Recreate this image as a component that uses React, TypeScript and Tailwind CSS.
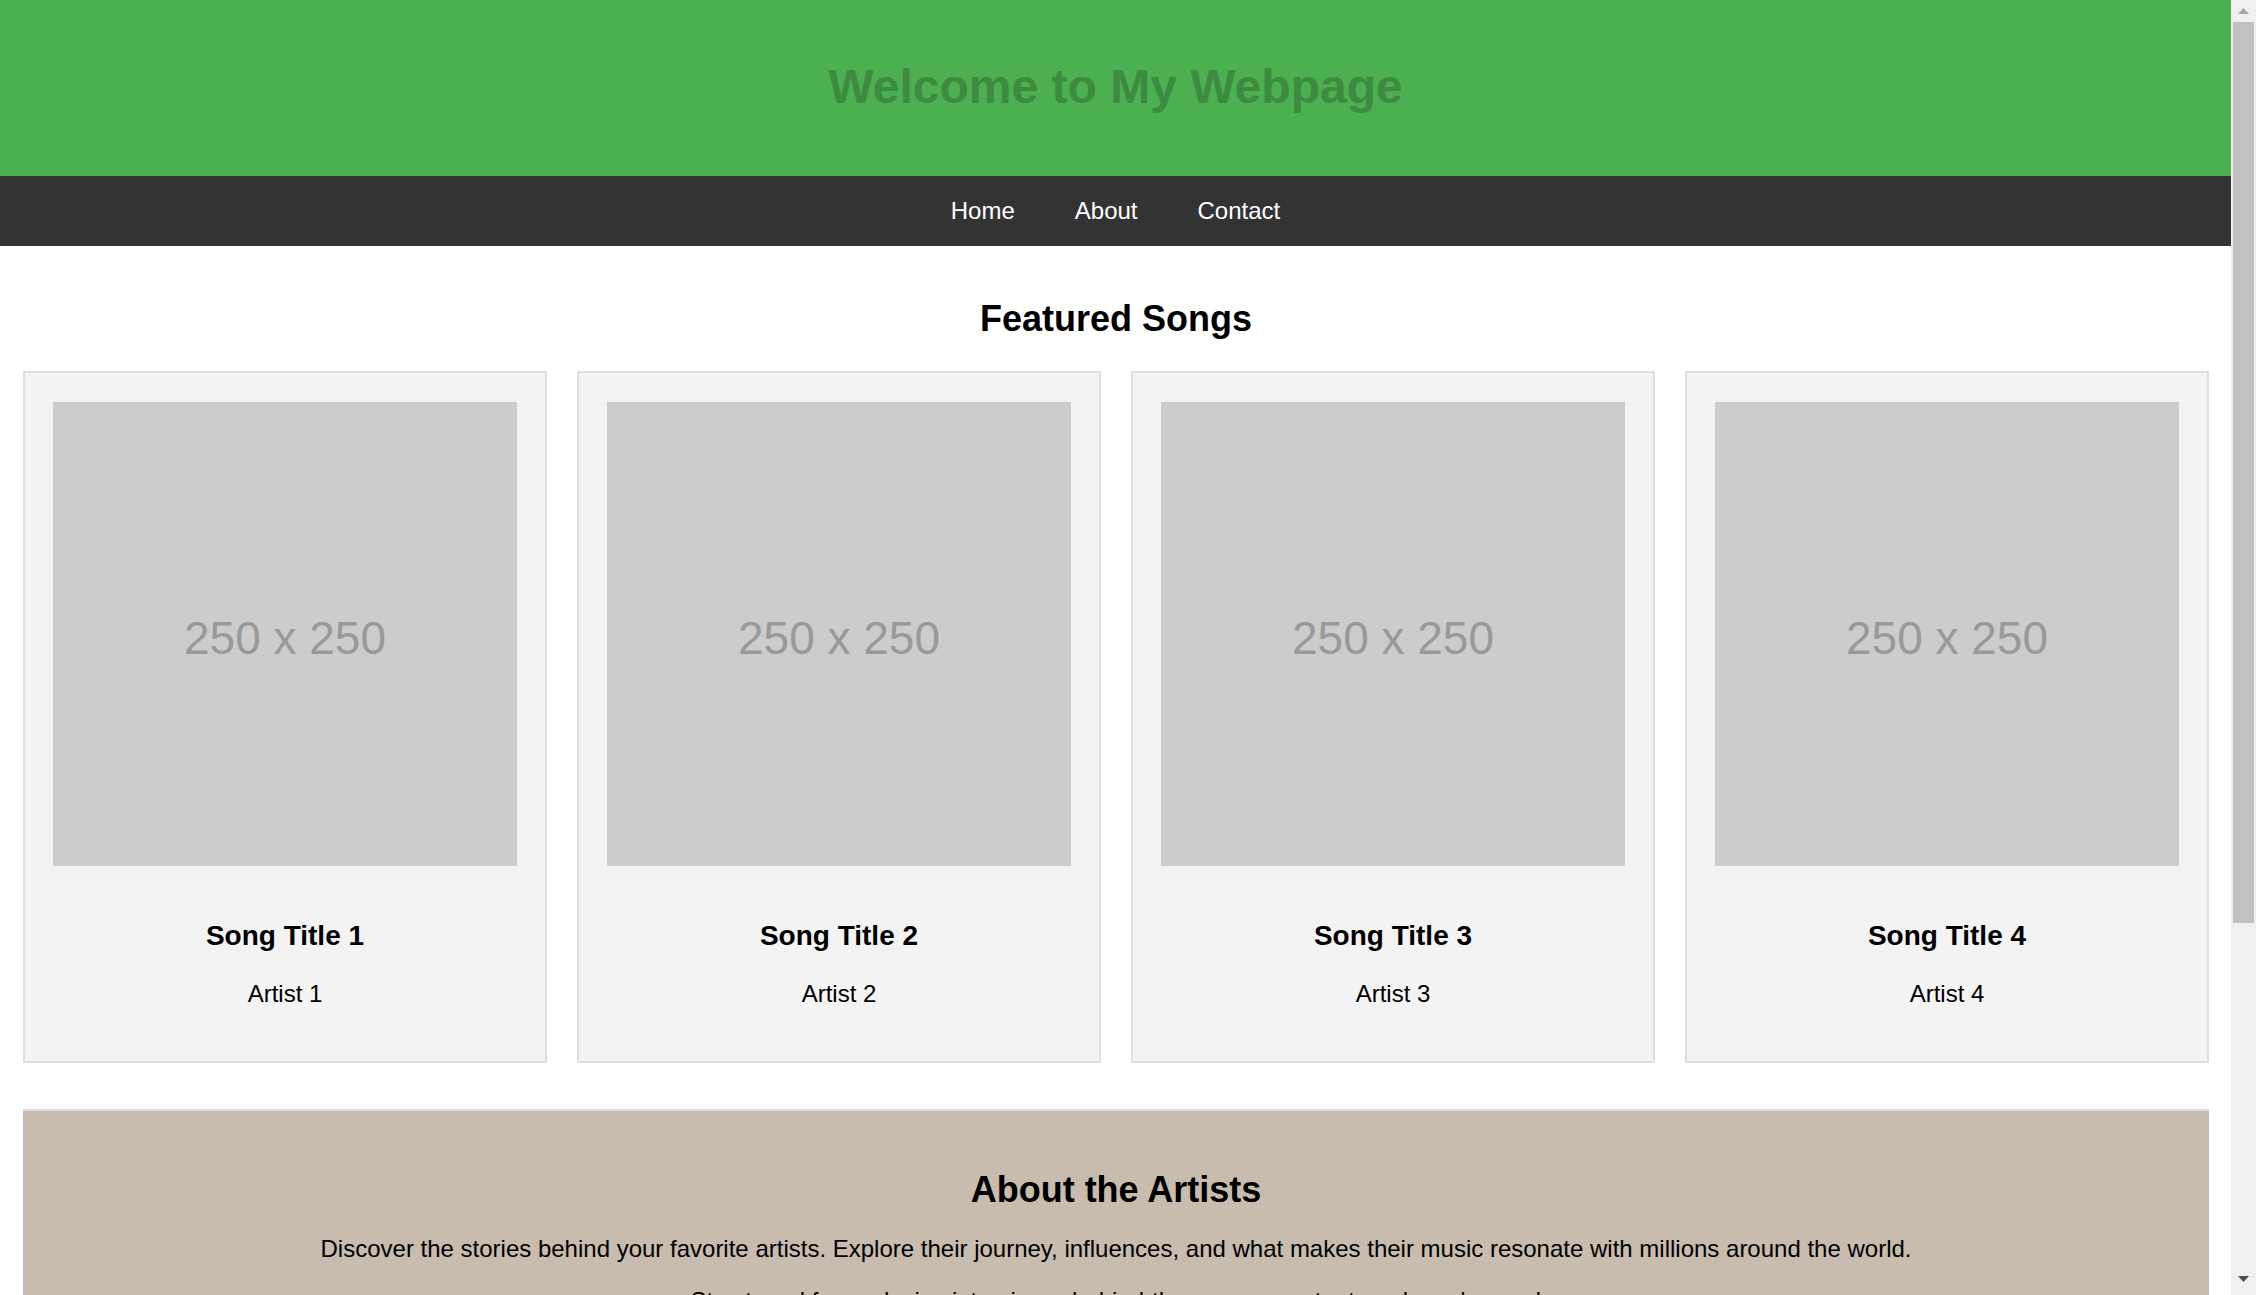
const songs = [
  { id: 1, title: "Song Title 1", artist: "Artist 1" },
  { id: 2, title: "Song Title 2", artist: "Artist 2" },
  { id: 3, title: "Song Title 3", artist: "Artist 3" },
  { id: 4, title: "Song Title 4", artist: "Artist 4" },
]

function Scrollbar() {
  return (
    <div className="w-[25px] shrink-0 h-screen bg-[#f0f0f0] flex flex-col items-center">
      <div className="h-[22px] w-full flex items-center justify-center">
        <svg width="11" height="6" viewBox="0 0 11 6">
          <path d="M5.5 0 L11 6 L0 6 Z" fill="#a3a3a3" />
        </svg>
      </div>
      <div className="w-[21px] h-[901px] bg-[#c1c1c1]" />
      <div className="flex-1" />
      <div className="h-[22px] w-full flex items-start justify-center pt-[3px]">
        <svg width="11" height="6" viewBox="0 0 11 6">
          <path d="M0 0 L11 0 L5.5 6 Z" fill="#505050" />
        </svg>
      </div>
    </div>
  )
}

export default function App() {
  return (
    <div className="flex h-screen overflow-hidden bg-white font-['Liberation_Sans',Arial,sans-serif] text-black">
      <div className="flex-1 min-w-0 h-screen overflow-hidden">
        {/* Header */}
        <header className="bg-[#4caf50] text-center pt-[59px] pb-[62px]">
          <h1 className="text-[48px] leading-[55px] font-bold text-[#3d8b40]">Welcome to My Webpage</h1>
        </header>

        {/* Nav */}
        <nav className="bg-[#333333] h-[70px] flex items-center justify-center gap-[60px] text-[24px] text-white">
          <a href="#">Home</a>
          <a href="#">About</a>
          <a href="#">Contact</a>
        </nav>

        {/* Featured */}
        <section className="px-[23px] pr-[22px]">
          <h2 className="text-center text-[36px] leading-[41px] font-bold mt-[52px] mb-[32px]">Featured Songs</h2>
          <div className="grid grid-cols-4 gap-[30px]">
            {songs.map((song) => (
              <div key={song.id} className="bg-[#f3f3f3] border-2 border-[#dedede] px-[28px] pt-[29px] pb-[28px] text-center">
                <div className="w-full aspect-square bg-[#cccccc] flex items-center justify-center pt-[8px]">
                  <span className="text-[46px] text-[#999999]">250 x 250</span>
                </div>
                <h3 className="text-[28px] leading-[32px] font-bold mt-[54px]">{song.title}</h3>
                <p className="text-[24px] leading-[28px] mt-[28px] mb-[25px]">{song.artist}</p>
              </div>
            ))}
          </div>
        </section>

        {/* About */}
        <section className="mx-[23px] mr-[22px] mt-[46px] bg-[#c8bcae] border-t-2 border-[#dcdcdc] text-center pt-[58px] pb-[40px]">
          <h2 className="text-[36px] leading-[41px] font-bold">About the Artists</h2>
          <p className="text-[24px] leading-[28px] mt-[25px]">
            Discover the stories behind your favorite artists. Explore their journey, influences, and what makes their music resonate with millions around the world.
          </p>
          <p className="text-[24px] leading-[28px] mt-[24px]">
            Stay tuned for exclusive interviews, behind-the-scenes content, and much more!
          </p>
        </section>
      </div>
      <Scrollbar />
    </div>
  )
}
